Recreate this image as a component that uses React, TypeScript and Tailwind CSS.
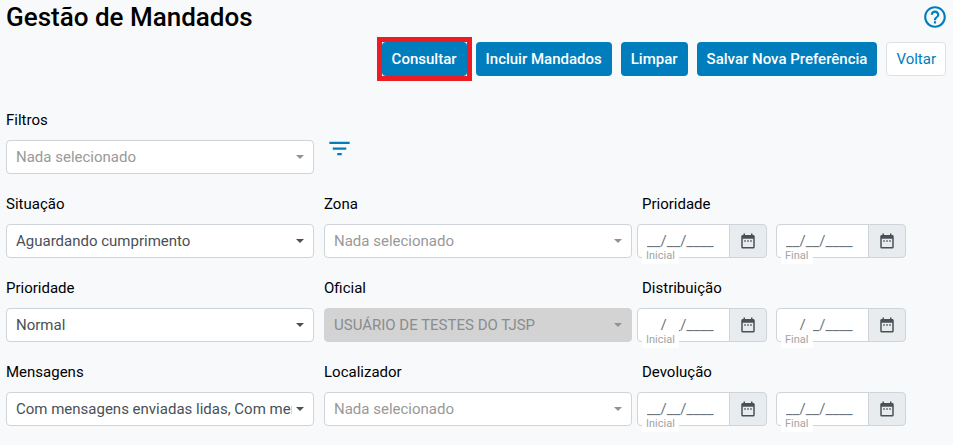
import { useId } from "react";
import { MdDateRange, MdFilterList, MdHelpOutline } from "react-icons/md";

type SelectFieldProps = {
  label: string;
  value: string;
  empty?: boolean;
  disabled?: boolean;
};

function SelectField({ label, value, empty = false, disabled = false }: SelectFieldProps) {
  const id = useId();
  const tone = disabled
    ? "border-[#d3d3d3] bg-[#d3d3d3] text-[#8a8c8e]"
    : empty
      ? "border-[#ced4da] bg-white text-[#999999]"
      : "border-[#ced4da] bg-white text-[#495057]";
  const caret = disabled || empty ? "border-t-[#929292]" : "border-t-[#495057]";
  return (
    <div className="min-w-0">
      <label htmlFor={id} className="block h-[30px] leading-5">
        {label}
      </label>
      <div className="relative">
        <select
          id={id}
          disabled={disabled}
          className={`block h-[34px] w-full appearance-none rounded border pr-[21px] pl-[9px] opacity-100 ${tone}`}
        >
          <option>{value}</option>
        </select>
        <span
          className={`pointer-events-none absolute top-[15px] right-[10px] border-x-4 border-t-4 border-x-transparent ${caret}`}
        />
      </div>
    </div>
  );
}

function DateField({ group, label, tall }: { group: string; label: string; tall: boolean }) {
  const id = useId();
  return (
    <div className="relative flex h-[34px] w-[130px]">
      <input
        id={id}
        type="text"
        placeholder="__/__/____"
        className="w-[93px] rounded-l border border-[#ced4da] bg-white pl-[9px] text-[#495057] placeholder:text-[#6c757d]"
      />
      <button
        type="button"
        aria-label={`${group} ${label}`}
        className="-ml-px flex flex-1 items-center justify-center rounded-r border border-[#ced4da] bg-[#e9ecef] text-[#495057]"
      >
        <MdDateRange size={18} />
      </button>
      <label
        htmlFor={id}
        className={`absolute -bottom-1.5 left-[5px] flex items-end bg-white px-1 pb-0.5 text-[11px] leading-[13px] text-[#a3a3a3] ${tall ? "h-[18px]" : "h-[15px]"}`}
      >
        {label}
      </label>
    </div>
  );
}

function DateRange({ label, tall = false }: { label: string; tall?: boolean }) {
  return (
    <fieldset className="-ml-[5px] min-w-0">
      <legend className="block h-[30px] pl-[5px] leading-5">{label}</legend>
      <div className="flex gap-[9px]">
        <DateField group={label} label="Inicial" tall={tall} />
        <DateField group={label} label="Final" tall={tall} />
      </div>
    </fieldset>
  );
}

function PrimaryButton({ children }: { children: string }) {
  return (
    <button type="button" className="h-[34px] rounded bg-[#007dbc] px-[10px] font-medium text-white">
      {children}
    </button>
  );
}

export default function App() {
  return (
    <main className="min-h-screen bg-[#f8f9fb] font-['Roboto',sans-serif] text-[15px] text-black">
      <header className="flex h-[34px] items-center justify-between pr-[5px] pl-1.5">
        <h1 className="text-[26px] leading-8 font-medium">Gestão de Mandados</h1>
        <button type="button" aria-label="Ajuda" className="text-[#007dbc]">
          <MdHelpOutline size={26} />
        </button>
      </header>

      <div className="flex justify-end gap-[9px] pt-2 pr-[7px]">
        <span className="-m-[5px] flex border-5 border-[#ed1c24]">
          <PrimaryButton>Consultar</PrimaryButton>
        </span>
        <PrimaryButton>Incluir Mandados</PrimaryButton>
        <PrimaryButton>Limpar</PrimaryButton>
        <PrimaryButton>Salvar Nova Preferência</PrimaryButton>
        <button
          type="button"
          className="h-[34px] rounded border border-[#dee2e6] bg-white px-[9px] text-[#007dbc]"
        >
          Voltar
        </button>
      </div>

      <form className="grid grid-cols-3 gap-x-[10px] gap-y-5 pt-[34px] pr-[3px] pb-5 pl-1.5">
        <SelectField label="Filtros" value="Nada selecionado" empty />
        <div className="col-span-2 flex items-center pt-3 pl-0.5">
          <button type="button" aria-label="Filtrar" className="text-[#007dbc]">
            <MdFilterList size={27} />
          </button>
        </div>

        <SelectField label="Situação" value="Aguardando cumprimento" />
        <SelectField label="Zona" value="Nada selecionado" empty />
        <DateRange label="Prioridade" />

        <SelectField label="Prioridade" value="Normal" />
        <SelectField label="Oficial" value="USUÁRIO DE TESTES DO TJSP" disabled />
        <DateRange label="Distribuição" tall />

        <SelectField label="Mensagens" value="Com mensagens enviadas lidas, Com mensagens enviadas não lidas" />
        <SelectField label="Localizador" value="Nada selecionado" empty />
        <DateRange label="Devolução" />
      </form>
    </main>
  );
}
